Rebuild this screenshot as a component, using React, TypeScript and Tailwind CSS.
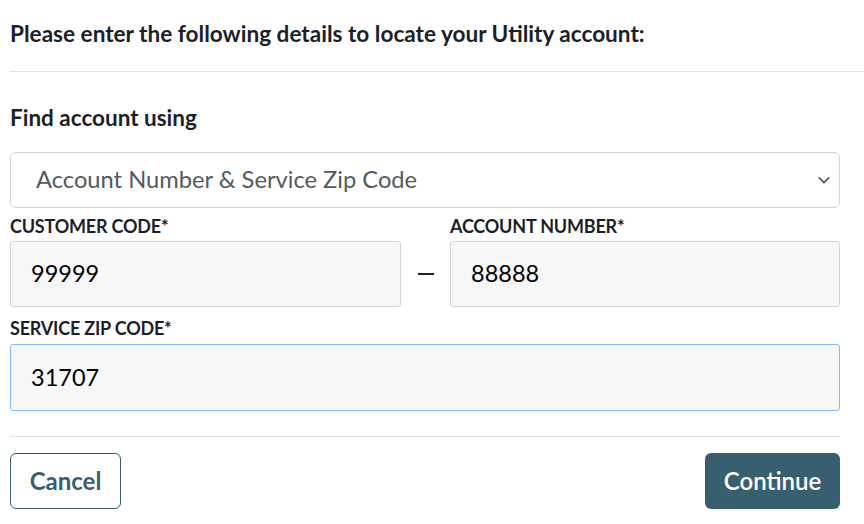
import React from "react";

export default function App() {
  return (
    <div className="w-[864px] h-[524px] bg-white overflow-hidden" style={{ fontFamily: "Lato, 'Noto Sans', sans-serif" }}>
      <div className="pl-[10px] pt-[20px]">
        <h1 className="text-[22.6px] leading-[28px] font-bold text-[#1c1f2a]">
          Please enter the following details to locate your Utility account:
        </h1>
      </div>
      <div className="ml-[10px] mt-[23px] h-[1px] bg-[#e2e2e2]" />
      <div className="pl-[10px] pr-[24px]">
        <h2 className="mt-[32px] text-[22.5px] leading-[28px] font-bold text-[#1c1f2a]">Find account using</h2>
        <div className="mt-[20px] h-[56px] rounded-[6px] border border-[#d3d3d8] flex items-center justify-between pl-[25px] pr-[8px]">
          <span className="text-[23.7px] text-[#555a60]">Account Number &amp; Service Zip Code</span>
          <svg width="14" height="14" viewBox="0 0 16 16" fill="none" stroke="#4a4d55" strokeWidth="1.8" strokeLinecap="round" strokeLinejoin="round">
            <path d="M2.5 5.5l5.5 5.5 5.5-5.5" />
          </svg>
        </div>
        <div className="mt-[8px] flex items-end">
          <div className="w-[391px]">
            <div className="text-[18px] leading-[20px] font-bold tracking-[-0.2px] text-[#1c1f2a] uppercase">
              Customer Code*
            </div>
            <div className="mt-[5px] h-[66px] rounded-[3px] border border-[#d4d4d6] bg-[#f7f7f7] flex items-center pl-[20px] text-[23.5px] text-black">
              99999
            </div>
          </div>
          <div className="w-[49px] h-[66px] flex items-center justify-center">
            <div className="w-[16px] h-[2px] bg-[#222]" />
          </div>
          <div className="flex-1">
            <div className="text-[18px] leading-[20px] font-bold tracking-[-0.2px] text-[#1c1f2a] uppercase">
              Account Number*
            </div>
            <div className="mt-[5px] h-[66px] rounded-[3px] border border-[#d4d4d6] bg-[#f7f7f7] flex items-center pl-[20px] text-[23.5px] text-black">
              88888
            </div>
          </div>
        </div>
        <div className="mt-[11px] text-[18px] leading-[20px] font-bold tracking-[-0.2px] text-[#1c1f2a] uppercase">
          Service Zip Code*
        </div>
        <div className="mt-[6px] h-[67px] rounded-[3px] border border-[#80bdff] bg-[#f7f7f7] flex items-center pl-[20px] text-[23.5px] text-black">
          31707
        </div>
        <div className="mt-[25px] h-[1px] bg-[#e2e2e2]" />
        <div className="mt-[16px] flex justify-between">
          <button className="h-[56px] w-[111px] rounded-[6px] border border-[#3a5d6e] bg-white text-[24px] font-bold text-[#385f70]">
            Cancel
          </button>
          <button className="h-[56px] w-[135px] rounded-[6px] bg-[#385f70] text-[24px] font-semibold text-white">
            Continue
          </button>
        </div>
      </div>
    </div>
  );
}
